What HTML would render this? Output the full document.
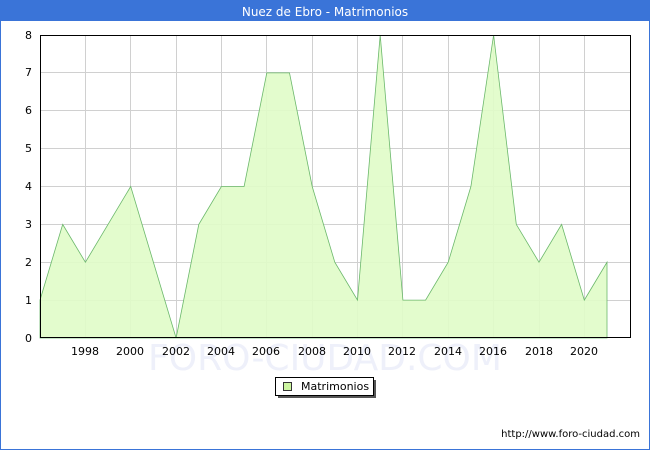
<!DOCTYPE html>
<html><head><style>
body{margin:0;width:650px;height:450px;overflow:hidden;background:#fff;font-family:"DejaVu Sans","Liberation Sans",sans-serif}
</style></head><body>
<svg width="650" height="450" xmlns="http://www.w3.org/2000/svg" style="display:block">
<rect x="0.5" y="0.5" width="649" height="449" fill="#fff" stroke="#3a74d8"/>
<rect x="0" y="0" width="650" height="21" fill="#3a74d8"/>
<text x="325" y="16" text-anchor="middle" font-size="12" fill="#fff" font-family="DejaVu Sans,sans-serif">Nuez de Ebro - Matrimonios</text>
<g stroke="#d0d0d0" stroke-width="1">
<line x1="40" x2="631" y1="300.5" y2="300.5"/><line x1="40" x2="631" y1="262.5" y2="262.5"/><line x1="40" x2="631" y1="224.5" y2="224.5"/><line x1="40" x2="631" y1="186.5" y2="186.5"/><line x1="40" x2="631" y1="148.5" y2="148.5"/><line x1="40" x2="631" y1="110.5" y2="110.5"/><line x1="40" x2="631" y1="72.5" y2="72.5"/>
<line x1="85.5" x2="85.5" y1="35" y2="338"/><line x1="130.5" x2="130.5" y1="35" y2="338"/><line x1="176.5" x2="176.5" y1="35" y2="338"/><line x1="221.5" x2="221.5" y1="35" y2="338"/><line x1="266.5" x2="266.5" y1="35" y2="338"/><line x1="312.5" x2="312.5" y1="35" y2="338"/><line x1="357.5" x2="357.5" y1="35" y2="338"/><line x1="402.5" x2="402.5" y1="35" y2="338"/><line x1="448.5" x2="448.5" y1="35" y2="338"/><line x1="493.5" x2="493.5" y1="35" y2="338"/><line x1="539.5" x2="539.5" y1="35" y2="338"/><line x1="584.5" x2="584.5" y1="35" y2="338"/>
</g>
<text x="325" y="370" text-anchor="middle" font-size="36" fill="#eef0fa" font-family="DejaVu Sans,sans-serif">FORO-CIUDAD.COM</text>
<polygon fill="#e0fcc8" fill-opacity="0.9" stroke="#6bb86b" stroke-width="0.8" points="40,338 40,300.1 62.7,224.4 85.4,262.25 108,224.4 130.7,186.5 153.4,262.25 176.1,338 198.8,224.4 221.4,186.5 244.1,186.5 266.8,72.9 289.5,72.9 312.2,186.5 334.8,262.25 357.5,300.1 380.2,35 402.9,300.1 425.6,300.1 448.2,262.25 470.9,186.5 493.6,35 516.3,224.4 539,262.25 561.6,224.4 584.3,300.1 607,262.25 607,338"/>
<rect x="40.5" y="35.5" width="590" height="302" fill="none" stroke="#000"/>
<g font-size="11" fill="#000" text-anchor="end">
<text x="32" y="342">0</text><text x="32" y="304">1</text><text x="32" y="266">2</text><text x="32" y="228">3</text><text x="32" y="190">4</text><text x="32" y="152">5</text><text x="32" y="114">6</text><text x="32" y="76">7</text><text x="32" y="39">8</text>
</g>
<g font-size="11" fill="#000" text-anchor="middle">
<text x="85" y="355">1998</text><text x="130" y="355">2000</text><text x="176" y="355">2002</text><text x="221" y="355">2004</text><text x="266" y="355">2006</text><text x="312" y="355">2008</text><text x="357" y="355">2010</text><text x="402" y="355">2012</text><text x="448" y="355">2014</text><text x="493" y="355">2016</text><text x="539" y="355">2018</text><text x="584" y="355">2020</text>
</g>
<rect x="278" y="380" width="98" height="18" fill="#555"/>
<rect x="275.5" y="377.5" width="98" height="18" fill="#fff" stroke="#000"/>
<rect x="283.5" y="382.5" width="8" height="8" fill="#ccf5a0" stroke="#333"/>
<text x="301" y="390" font-size="11" fill="#000">Matrimonios</text>
<text x="640" y="437" text-anchor="end" font-size="10" fill="#000">http://www.foro-ciudad.com</text>
</svg>
</body></html>
